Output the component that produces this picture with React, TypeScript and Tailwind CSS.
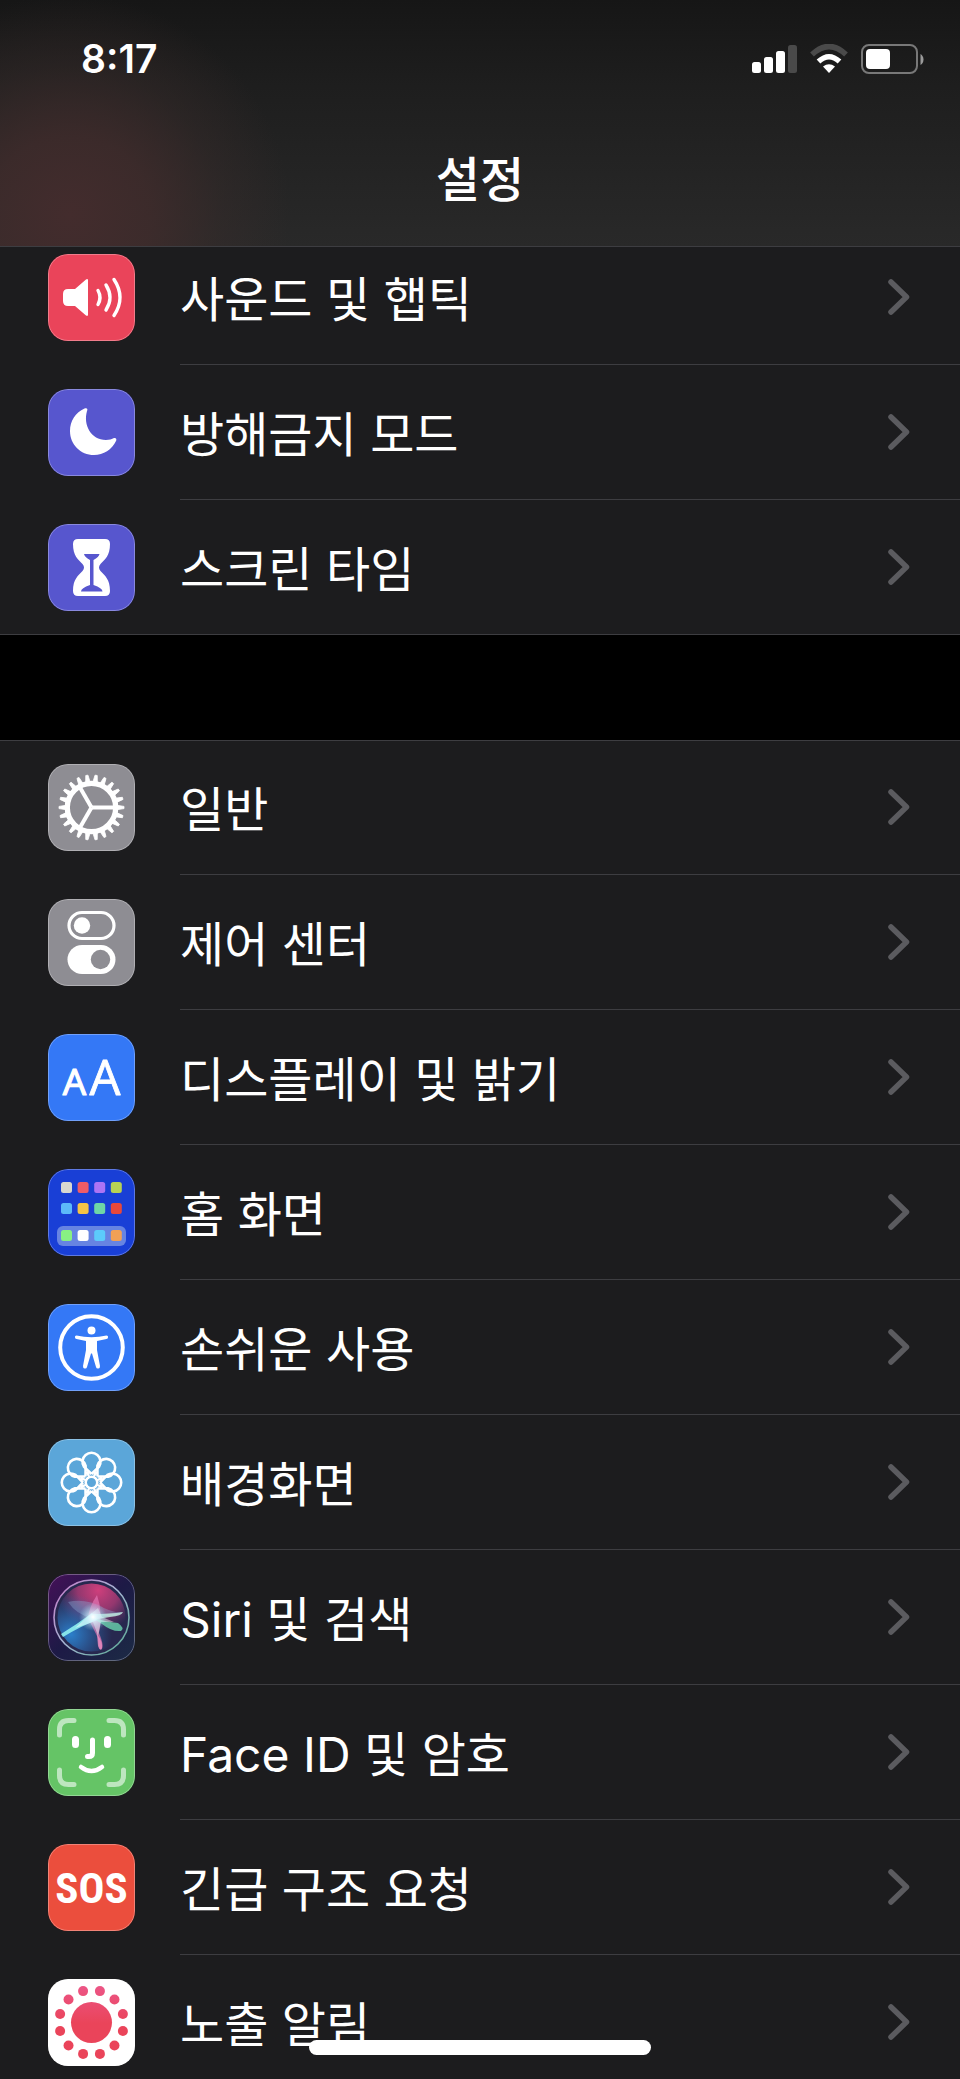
import React from 'react';

type Item = { label: string; tile: string; icon: React.ReactNode };

const dots = (n: number) => Array.from({ length: n }, (_, i) => i);

const SoundIcon = () => (
  <>
    <path d="M20 35h7l11-9.500q2-1.200 2 1V60.500q0 2.200-2 1L27 52h-7q-5 0-5-5v-7q0-5 5-5z" fill="#fff" />
    <g fill="none" stroke="#fff" strokeWidth="3.400" strokeLinecap="round">
      <path d="M50 36.500q4 7 0 14" />
      <path d="M58 31q8 12.500 0 25" />
      <path d="M66 25.500q12 18 0 36" />
    </g>
  </>
);

const MoonIcon = () => (
  <path
    d="M36.500 19.500C39 18.500 40 20 39 22C35 36 43 51 58 51C61 51 64 50 66 49C68 48.500 69 50 68 52C64 60.500 55.500 66 46 66C32.500 66 22 55.500 22 42C22 32 27.500 23.500 36.500 19.500z"
    fill="#fff"
  />
);

const HourglassIcon = () => (
  <>
    <path
      d="M30 15h27q5 0 5 5c0 12-5 15-9.500 20q-3 3.500 0 7C57 52 62 55 62 67q0 5-5 5H30q-5 0-5-5c0-12 5-15 9.500-20q3-3.500 0-7C30 35 25 32 25 20q0-5 5-5z"
      fill="#fff"
    />
    <path d="M36 30h15.500q-.5 3-6 6V61q9 3 9 6.500H33q0-3.500 9-6.500V36q-5.500-3-6-6z" fill="#5756ce" />
  </>
);

const GearIcon = () => (
  <g stroke="#fff" fill="none">
    {dots(22).map((i) => (
      <path
        key={i}
        d="M41.300 18L42.400 11h2.200L45.700 18z"
        fill="#fff"
        strokeWidth=".8"
        strokeLinejoin="round"
        transform={`rotate(${((i + 0.5) * 360) / 22} 43.500 43.500)`}
      />
    ))}
    <circle cx="43.500" cy="43.500" r="24.200" strokeWidth="5.300" />
    <g strokeWidth="4">
      <path d="M43.500 43.500H67" />
      <path d="M43.500 43.500L32 23.500" />
      <path d="M43.500 43.500L32 63.500" />
    </g>
  </g>
);

const TogglesIcon = () => (
  <>
    <rect x="21" y="13.500" width="45" height="26" rx="13" fill="none" stroke="#fff" strokeWidth="3.200" />
    <circle cx="34" cy="26.500" r="8.200" fill="#fff" />
    <rect x="19.500" y="46" width="48" height="29" rx="14.500" fill="#fff" />
    <circle cx="52.500" cy="60.500" r="9.700" fill="#8e8d93" />
  </>
);

const LettersIcon = () => (
  <g fill="#fff" stroke="#fff" strokeLinejoin="round" textAnchor="middle" className="font-['Open_Sans']">
    <text x="26.500" y="61" strokeWidth="1.200" className="text-[37px]">
      A
    </text>
    <text x="57" y="61" strokeWidth=".8" className="text-[49px]">
      A
    </text>
  </g>
);

const HomeScreenIcon = () => {
  const rows = [
    ['#d8d8d0', '#ee5c67', '#ad74f4', '#b8d254'],
    ['#5cb9f9', '#f6c445', '#6fd6a6', '#e8483a'],
    ['#88f083', '#ffffff', '#5ccbfb', '#f1a056'],
  ];
  const tops = [13, 34, 61];
  return (
    <>
      <rect x="9" y="57" width="69" height="20" rx="6" fill="#6784e2" />
      {rows.map((colors, r) =>
        colors.map((color, c) => (
          <rect key={color} x={13 + c * 16.6} y={tops[r]} width="11" height="11" rx="2.500" fill={color} />
        ))
      )}
    </>
  );
};

const AccessibilityIcon = () => (
  <>
    <circle cx="43.500" cy="43.500" r="31.300" fill="none" stroke="#fff" strokeWidth="4" />
    <circle cx="43.500" cy="26.500" r="4" fill="#fff" />
    <path
      d="M28.500 31.500Q43.500 35 58.500 31.500Q60.500 31.500 60 33.500Q60 34.500 58.500 35L49 37V46L52 62Q52 64.500 50.500 64.500Q48.500 65 48 63L44 49.500H43L39 63Q38.500 65 36.500 64.500Q35 64.500 35 62L38 46V37L28.500 35Q27 34.500 27 33.500Q26.500 31.500 28.500 31.500z"
      fill="#fff"
    />
  </>
);

const FlowerIcon = () => (
  <g fill="none" stroke="#fff" strokeWidth="2.600">
    {dots(8).map((i) => (
      <g key={i} transform={`rotate(${i * 45} 43.500 43.500)`}>
        <path d="M43.500 35L35.900 27.600A9 9 0 1 1 51.100 27.600L43.500 35" />
        <path d="M43.500 37.500L42.500 32.500H44.500z" fill="#fff" transform="rotate(22.500 43.500 43.500)" strokeWidth="1.600" />
      </g>
    ))}
    <circle cx="43.500" cy="43.500" r="5.800" />
  </g>
);

const SiriIcon = () => (
  <>
    <defs>
      <linearGradient id="siri-tile" x1="0" y1="0" x2="1" y2="1">
        <stop offset="0" stopColor="#451058" />
        <stop offset=".5" stopColor="#1d1a46" />
        <stop offset="1" stopColor="#1c2b45" />
      </linearGradient>
      <linearGradient id="siri-ring" x1="0" y1="0" x2="1" y2="1">
        <stop offset="0" stopColor="#c678c8" />
        <stop offset=".5" stopColor="#a4b5d2" />
        <stop offset="1" stopColor="#54a98e" />
      </linearGradient>
      <radialGradient id="siri-pink" cx=".6" cy=".1" r=".6">
        <stop offset="0" stopColor="#cf3f7c" />
        <stop offset=".5" stopColor="#a63a74" stopOpacity=".85" />
        <stop offset="1" stopColor="#8a3a78" stopOpacity="0" />
      </radialGradient>
      <radialGradient id="siri-blue" cx=".2" cy=".75" r=".6">
        <stop offset="0" stopColor="#2b7fcb" />
        <stop offset="1" stopColor="#2f6fb8" stopOpacity="0" />
      </radialGradient>
      <radialGradient id="siri-glow">
        <stop offset="0" stopColor="#fff" />
        <stop offset=".3" stopColor="#dcf6ff" stopOpacity=".75" />
        <stop offset="1" stopColor="#8fd8f0" stopOpacity="0" />
      </radialGradient>
    </defs>
    <rect width="87" height="87" fill="url(#siri-tile)" />
    <circle cx="43.500" cy="43.500" r="37.500" fill="#27284f" />
    <circle cx="43.500" cy="43.500" r="34" fill="url(#siri-pink)" />
    <circle cx="43.500" cy="43.500" r="34" fill="url(#siri-blue)" />
    <path d="M20 28Q38 24 56 34Q66 39 74 38Q72 42 60 42L43 44Q28 40 20 28z" fill="#8fb4dc" fillOpacity=".35" />
    <path d="M49 21Q41 33 40 44L50 64Q51 76 53 76Q57 73 51 59Q55 38 49 21z" fill="#ea79b8" fillOpacity=".65" />
    <path d="M49 60Q55 68 54 74Q52 78 50 72z" fill="#ee8cc0" fillOpacity=".8" />
    <path d="M43 43Q58 48 70 49Q77 54 73 57Q64 58 54 50z" fill="#6ee0b4" fillOpacity=".75" />
    <path d="M44 39Q28 51 13 60L15 63Q33 52 49 46z" fill="#8ff0f0" fillOpacity=".9" />
    <path d="M43 40Q62 40 75 38Q74 42 62 43L44 46z" fill="#c4f2e6" fillOpacity=".8" />
    <path d="M38 44L50 34L54 43L66 48L53 48L50 62L45 48L27 54z" fill="#fff" fillOpacity=".45" />
    <circle cx="45" cy="43" r="14" fill="url(#siri-glow)" />
    <circle cx="43.500" cy="43.500" r="37.500" fill="none" stroke="url(#siri-ring)" strokeWidth="1.600" />
  </>
);

const FaceIcon = () => (
  <g fill="none" stroke="#fff" strokeLinecap="round" strokeLinejoin="round">
    <g stroke="#bde6bf" strokeWidth="5">
      <path d="M11.500 26V20.500Q11.500 11.500 20.500 11.500H26" />
      <path d="M61 11.500H66.500Q75.500 11.500 75.500 20.500V26" />
      <path d="M11.500 61V66.500Q11.500 75.500 20.500 75.500H26" />
      <path d="M61 75.500H66.500Q75.500 75.500 75.500 66.500V61" />
    </g>
    <path d="M27.500 30.500V35.500M59.500 30.500V35.500" strokeWidth="7" />
    <path d="M44.500 31V44Q44.500 47.500 41 47.500H39.500" strokeWidth="5" />
    <path d="M33 58Q43.500 66 54 58" strokeWidth="4.500" />
  </g>
);

const SosIcon = () => (
  <text
    x="43.500"
    y="59"
    textAnchor="middle"
    fill="#fff"
    className="font-['Liberation_Sans_Narrow','Roboto_Condensed','Open_Sans_Condensed','Roboto'] text-[43px] font-bold"
  >
    SOS
  </text>
);

const ExposureIcon = () => (
  <>
    <defs>
      <linearGradient id="exposure" gradientUnits="userSpaceOnUse" x1="0" y1="8" x2="0" y2="80">
        <stop offset="0" stopColor="#ec5585" />
        <stop offset=".5" stopColor="#ea445a" />
        <stop offset="1" stopColor="#ea445a" />
      </linearGradient>
    </defs>
    <g fill="url(#exposure)">
      <circle cx="43.500" cy="43.500" r="20.500" />
      {dots(12).map((i) => {
        const angle = ((i * 30 + 15) * Math.PI) / 180;
        return <circle key={i} cx={43.5 + 32.5 * Math.cos(angle)} cy={43.5 + 32.5 * Math.sin(angle)} r="5" />;
      })}
    </g>
  </>
);

const firstGroup: Item[] = [
  { label: '사운드 및 햅틱', tile: 'bg-[#ea445a]', icon: <SoundIcon /> },
  { label: '방해금지 모드', tile: 'bg-[#5756ce]', icon: <MoonIcon /> },
  { label: '스크린 타임', tile: 'bg-[#5756ce]', icon: <HourglassIcon /> },
];

const secondGroup: Item[] = [
  { label: '일반', tile: 'bg-[#8e8d93]', icon: <GearIcon /> },
  { label: '제어 센터', tile: 'bg-[#8e8d93]', icon: <TogglesIcon /> },
  { label: '디스플레이 및 밝기', tile: 'bg-[#3478f6]', icon: <LettersIcon /> },
  { label: '홈 화면', tile: 'bg-[#193fd6]', icon: <HomeScreenIcon /> },
  { label: '손쉬운 사용', tile: 'bg-[#3478f6]', icon: <AccessibilityIcon /> },
  { label: '배경화면', tile: 'bg-[#5ba6d9]', icon: <FlowerIcon /> },
  { label: 'Siri 및 검색', tile: 'bg-[#1d1a46]', icon: <SiriIcon /> },
  { label: 'Face ID 및 암호', tile: 'bg-[#65c466]', icon: <FaceIcon /> },
  { label: '긴급 구조 요청', tile: 'bg-[#eb4e3d]', icon: <SosIcon /> },
  { label: '노출 알림', tile: 'bg-white', icon: <ExposureIcon /> },
];

const SettingsRow: React.FC<{ item: Item }> = ({ item }) => (
  <li className="group last:border-b last:border-[#3d3d41]">
    <a href="#" className="flex h-[135px] items-center pl-12 group-last:h-[134px]">
      <span className={`relative mr-[45px] block size-[87px] shrink-0 overflow-hidden rounded-[20px] ${item.tile}`}>
        <svg viewBox="0 0 87 87" className="size-full" aria-hidden="true">
          {item.icon}
        </svg>
        <span className="absolute inset-0 rounded-[20px] border border-white/30" />
      </span>
      <span className="flex h-full flex-1 items-center justify-between border-b border-[#3d3d41] pr-[50px] group-last:border-b-0">
        <span className="pt-1.5 text-5xl whitespace-nowrap">{item.label}</span>
        <svg viewBox="0 0 22 36" className="h-9 w-[22px]" fill="none" aria-hidden="true">
          <path d="M3 3L18.500 18L3 33" stroke="#5b5b5f" strokeWidth="5.500" strokeLinecap="round" strokeLinejoin="round" />
        </svg>
      </span>
    </a>
  </li>
);

const StatusBar = () => (
  <div className="flex items-center justify-between pt-[39px] pr-[36px] pl-[81px]">
    <time className="text-[39px] leading-10 font-semibold">8:17</time>
    <div className="flex items-center gap-3">
      <svg viewBox="0 0 45 30" className="h-[30px] w-[45px]" fill="#fff" aria-label="신호">
        <rect x="0" y="18" width="9" height="11" rx="2.500" />
        <rect x="12" y="13" width="9" height="16" rx="2.500" />
        <rect x="24" y="7" width="9" height="22" rx="2.500" />
        <rect x="36" y="1" width="9" height="28" rx="2.500" fill="#4a4a4a" />
      </svg>
      <svg viewBox="0 0 40 30" className="h-[30px] w-10" aria-label="Wi-Fi">
        <path d="M3 10.500Q20-5.500 37 10.500" fill="none" stroke="#4a4a4a" strokeWidth="5.500" />
        <path d="M9.500 17.500Q20 8 30.500 17.500" fill="none" stroke="#fff" strokeWidth="5.500" />
        <path d="M14 22.500Q20 18 26 22.500L20 29z" fill="#fff" />
      </svg>
      <svg viewBox="0 0 63 30" className="h-[30px] w-[63px]" aria-label="배터리">
        <rect x="1" y="1" width="55" height="28" rx="7" fill="none" stroke="#787878" strokeWidth="2" />
        <rect x="5" y="5" width="24" height="20" rx="4" fill="#fff" />
        <path d="M59.500 10q3 2 3 5.500t-3 5.500z" fill="#9a9a9a" />
      </svg>
    </div>
  </div>
);

const App: React.FC = () => {
  return (
    <div className="flex h-screen flex-col overflow-hidden bg-[#1c1c1e] font-['Inter','Noto_Sans_CJK_KR',sans-serif] text-white">
      <header className="relative z-10 h-[247px] shrink-0 border-b border-[#3d3d41] bg-[radial-gradient(circle_at_70px_215px,#432c2d_0px,#412c2ccc_80px,#3a2c2b66_150px,#302c2b00_220px),linear-gradient(#161616,#1e1e1e_35%,#292929)]">
        <StatusBar />
        <h1 className="mt-[73px] text-center text-5xl leading-[56px] font-medium">설정</h1>
      </header>

      <main>
        <ul className="-mt-[17px]">
          {firstGroup.map((item) => (
            <SettingsRow key={item.label} item={item} />
          ))}
        </ul>
        <div className="h-[105px] bg-black" />
        <div className="border-t border-[#3d3d41]">
          <ul className="-mt-px">
            {secondGroup.map((item) => (
              <SettingsRow key={item.label} item={item} />
            ))}
          </ul>
        </div>
      </main>

      <div className="fixed bottom-6 left-1/2 z-20 h-[15px] w-[342px] -translate-x-1/2 rounded-full bg-white" />
    </div>
  );
};

export default App;
